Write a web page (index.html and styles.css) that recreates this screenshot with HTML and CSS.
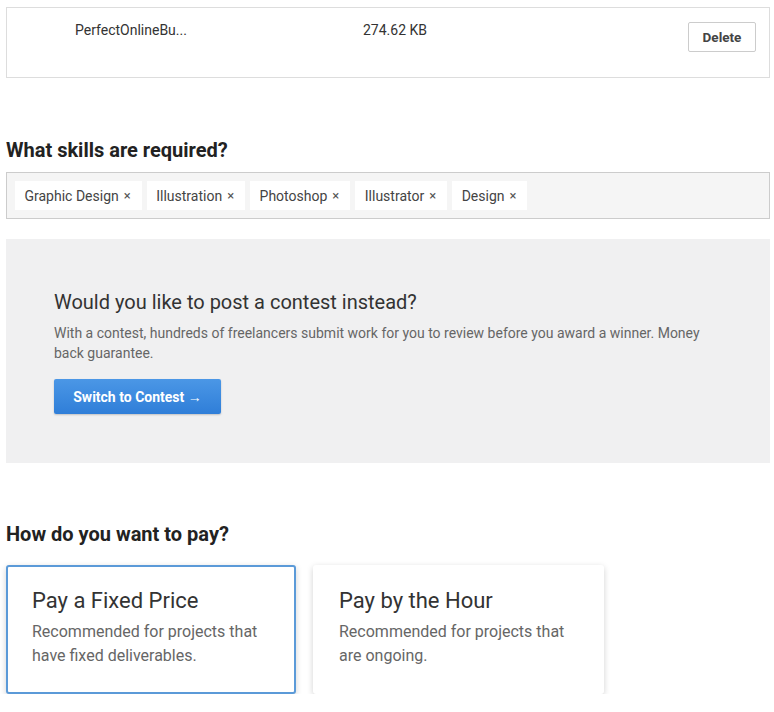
FILE: index.html
```html
<!DOCTYPE html>
<html lang="en">
  <head>
    <meta charset="UTF-8" />
    <title>Post a Project</title>
    <link rel="stylesheet" href="styles.css">
  </head>
  <body>
    <div class="container">
      <div class="file-box">
        <div class="file-row">
          <span class="file-name">PerfectOnlineBu...</span>
          <span class="file-size">274.62 KB</span>
          <button class="btn-delete">Delete</button>
        </div>
      </div>

      <h2 class="section-title skills-title">What skills are required?</h2>
      <div class="skills-box">
        <span class="tag">Graphic Design <span class="tag-x">×</span></span>
        <span class="tag">Illustration <span class="tag-x">×</span></span>
        <span class="tag">Photoshop <span class="tag-x">×</span></span>
        <span class="tag">Illustrator <span class="tag-x">×</span></span>
        <span class="tag">Design <span class="tag-x">×</span></span>
      </div>

      <div class="contest">
        <h3 class="contest-title">Would you like to post a contest instead?</h3>
        <p class="contest-text">With a contest, hundreds of freelancers submit work for you to review before you award a winner. Money back guarantee.</p>
        <button class="btn-contest">Switch to Contest &rarr;</button>
      </div>

      <h2 class="section-title pay-title">How do you want to pay?</h2>
      <div class="pay-options">
        <div class="pay-card selected">
          <div class="pay-name">Pay a Fixed Price</div>
          <p class="pay-desc">Recommended for projects that have fixed deliverables.</p>
        </div>
        <div class="pay-card">
          <div class="pay-name">Pay by the Hour</div>
          <p class="pay-desc">Recommended for projects that are ongoing.</p>
        </div>
      </div>
    </div>
  </body>
</html>
```

FILE: styles.css
```css
* {
  margin: 0;
  padding: 0;
  box-sizing: border-box;
}

body {
  font-family: Roboto, "Liberation Sans", Arial, sans-serif;
  color: #333;
  background: #fff;
  padding: 7px 4px 0 6px;
  overflow: hidden;
}

.file-box {
  border: 1px solid #ddd;
  height: 71px;
  padding: 0 13px 0 68px;
}

.file-row {
  display: flex;
  align-items: flex-start;
  padding-top: 13px;
  font-size: 14px;
  color: #333;
}

.file-name {
  width: 288px;
  line-height: 19px;
}

.file-size {
  flex: 1;
  line-height: 19px;
}

.btn-delete {
  margin-top: 1px;
  width: 68px;
  height: 30px;
  background: #fff;
  border: 1px solid #ccc;
  border-radius: 2px;
  font-family: inherit;
  font-size: 13.5px;
  font-weight: 700;
  color: #444;
}

.section-title {
  font-size: 20px;
  font-weight: 700;
  color: #222;
  line-height: 24px;
}

.skills-title {
  margin-top: 60px;
}

.skills-box {
  margin-top: 10px;
  background: #f5f5f5;
  border: 1px solid #ccc;
  height: 47px;
  padding: 8px 8px;
  display: flex;
  gap: 5px;
}

.tag {
  background: #fff;
  height: 29px;
  padding: 0 11px 0 9.5px;
  font-size: 14px;
  color: #444;
  display: flex;
  align-items: center;
  gap: 5px;
}

.tag-x {
  font-size: 13px;
  color: #555;
}

.contest {
  margin-top: 20px;
  background: #f0f0f1;
  height: 224px;
  padding: 50px 48px 0;
}

.contest-title {
  font-size: 20px;
  font-weight: 400;
  color: #333;
  line-height: 26px;
}

.contest-text {
  margin-top: 8px;
  font-size: 14px;
  line-height: 20px;
  color: #666;
  max-width: 660px;
}

.btn-contest {
  margin-top: 16px;
  width: 167px;
  height: 35px;
  border: none;
  border-radius: 2px;
  background: linear-gradient(to bottom, #4b97e6, #2f7ed8);
  box-shadow: 0 1px 2px rgba(0, 0, 0, 0.2);
  color: #fff;
  font-family: inherit;
  font-size: 14px;
  font-weight: 700;
}

.pay-title {
  margin-top: 59px;
}

.pay-options {
  margin-top: 19px;
  display: flex;
  gap: 17px;
}

.pay-card {
  width: 291px;
  height: 129px;
  background: #fff;
  border-radius: 3px;
  padding: 22px 24px 0 26px;
  box-shadow: 0 2px 6px rgba(0, 0, 0, 0.18);
}

.pay-card.selected {
  width: 290px;
  border: 2px solid #5b9ad8;
  padding: 20px 22px 0 24px;
}

.pay-name {
  font-size: 22px;
  color: #333;
  line-height: 28px;
}

.pay-desc {
  margin-top: 5px;
  font-size: 16px;
  line-height: 24px;
  color: #666;
}
```
